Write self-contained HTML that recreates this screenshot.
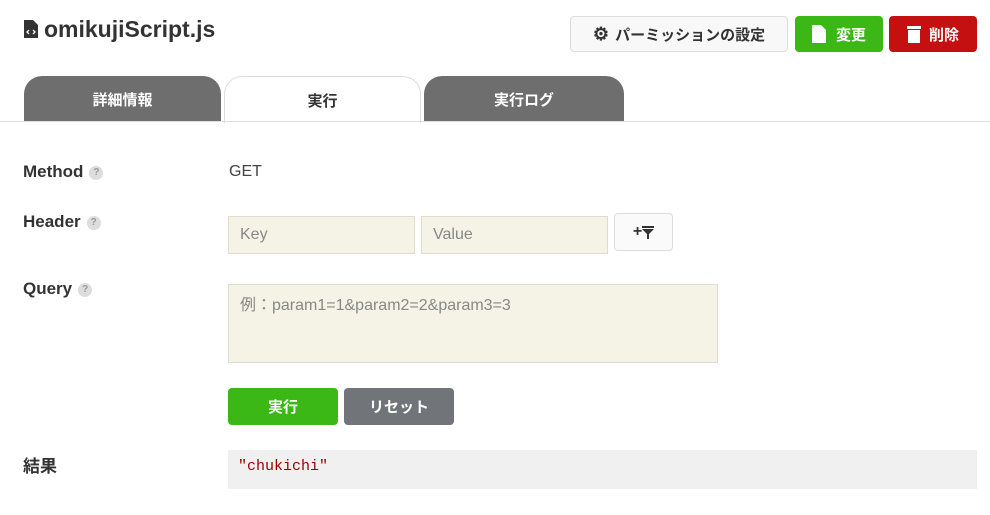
<!DOCTYPE html>
<html><head><meta charset="utf-8"><style>
*{box-sizing:border-box;margin:0;padding:0}
body{width:990px;height:515px;background:#fff;font-family:"Liberation Sans","Noto Sans CJK JP",sans-serif;color:#333;position:relative;overflow:hidden}
.a{position:absolute}
.title{left:24px;top:16px;font-size:23px;font-weight:bold;color:#333}
.btn{position:absolute;border-radius:4px;font-size:15px;font-weight:bold;display:flex;align-items:center;justify-content:center}
.tab{position:absolute;top:76px;height:46px;border-radius:18px 18px 0 0;font-size:15px;font-weight:bold;display:flex;align-items:center;justify-content:center}
.lbl{position:absolute;left:23px;font-size:17px;font-weight:bold;color:#333}
.q{display:inline-block;width:14px;height:14px;border-radius:50%;background:#ddd;color:#999;font-size:10px;text-align:center;line-height:14px;vertical-align:middle;margin-left:6px}
.inp{position:absolute;background:#f5f2e6;border:1px solid #e0ddd0;color:#888;font-size:16px;padding-left:11px}
</style></head><body>
<div class="a title"><svg width="14" height="18" viewBox="0 0 14 18" style="vertical-align:-1px;margin-right:6px"><path d="M0 0h9l5 5v13H0z" fill="#333"/><path d="M5 10l-2 2 2 2M9 10l2 2-2 2" stroke="#fff" fill="none" stroke-width="1.3"/></svg>omikujiScript.js</div>
<div class="btn" style="left:570px;top:16px;width:218px;height:36px;background:#f8f8f8;border:1px solid #ddd;color:#333"><span style="font-size:18px;margin-right:6px">⚙</span>パーミッションの設定</div>
<div class="btn" style="left:795px;top:16px;width:88px;height:36px;background:#3bb815;color:#fff"><svg width="14" height="18" style="margin-right:10px"><path d="M0 0h9l5 5v13H0z" fill="#fff"/></svg>変更</div>
<div class="btn" style="left:889px;top:16px;width:88px;height:36px;background:#c41010;color:#fff"><svg width="14" height="18" style="margin-right:8px"><rect x="0" y="1" width="14" height="3" fill="#fff"/><rect x="1" y="5" width="12" height="13" fill="#fff"/></svg>削除</div>
<div class="tab" style="left:24px;width:197px;background:#6e6e6e;color:#fff">詳細情報</div>
<div class="tab" style="left:224px;width:197px;background:#fff;border:1px solid #ddd;border-bottom:none;color:#333;height:47px">実行</div>
<div class="tab" style="left:424px;width:200px;background:#6e6e6e;color:#fff">実行ログ</div>
<div class="a" style="left:0;top:121px;width:990px;height:1px;background:#ddd"></div>
<div class="lbl" style="top:162px">Method<span class="q">?</span></div>
<div class="a" style="left:229px;top:163px;font-size:16px;color:#444">GET</div>
<div class="lbl" style="top:212px">Header<span class="q">?</span></div>
<div class="inp" style="left:228px;top:216px;width:187px;height:38px;line-height:36px">Key</div>
<div class="inp" style="left:421px;top:216px;width:187px;height:38px;line-height:36px">Value</div>
<div class="btn" style="left:614px;top:213px;width:59px;height:38px;background:#fafafa;border:1px solid #ddd;color:#333;font-size:16px">+<svg width="12" height="13"><path d="M0 0h12v2H0zM0 3h12L7 8v5H5V8z" fill="#333"/></svg></div>
<div class="lbl" style="top:279px">Query<span class="q">?</span></div>
<div class="inp" style="left:228px;top:284px;width:490px;height:79px;padding-top:6px">例：param1=1&amp;param2=2&amp;param3=3</div>
<div class="btn" style="left:228px;top:388px;width:110px;height:37px;background:#3bb815;color:#fff">実行</div>
<div class="btn" style="left:344px;top:388px;width:110px;height:37px;background:#717478;color:#fff">リセット</div>
<div class="lbl" style="top:452px">結果</div>
<div class="a" style="left:228px;top:450px;width:749px;height:39px;background:#f0f0f0;color:#900;font-family:'Liberation Mono',monospace;font-size:15px;padding:8px 10px">"chukichi"</div>
</body></html>
